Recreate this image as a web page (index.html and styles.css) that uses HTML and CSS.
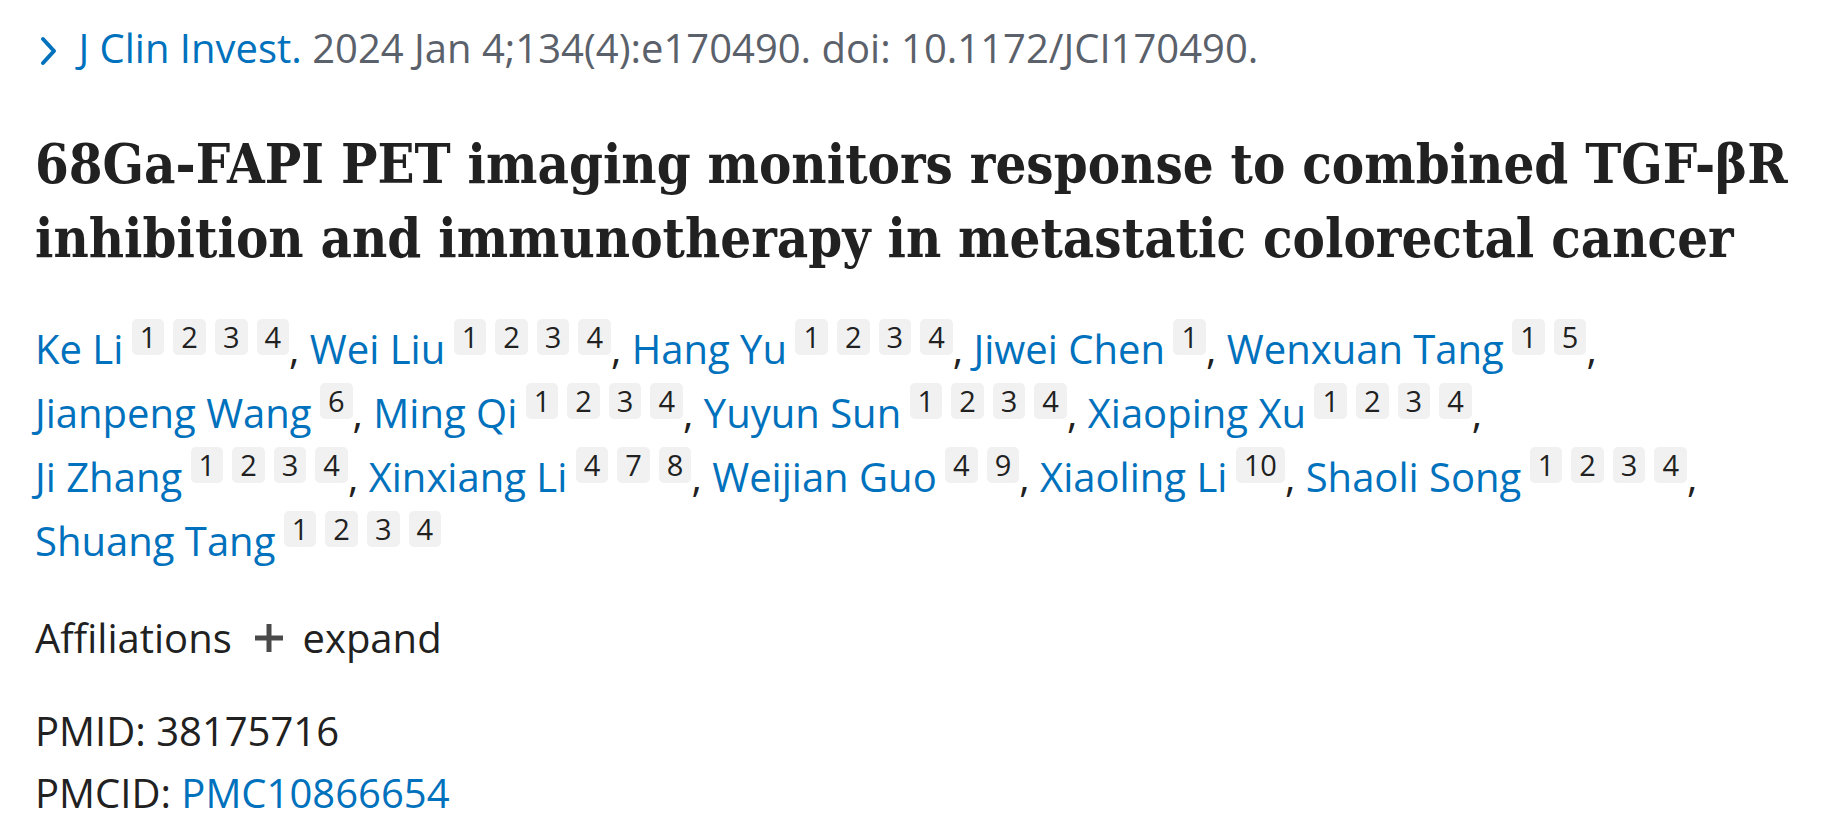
FILE: index.html
```html
<!DOCTYPE html>
<html lang="en">
<head>
    <meta charset="UTF-8">
    <meta name="viewport" content="width=device-width, initial-scale=1.0">
    <title>68Ga-FAPI PET imaging - PubMed</title>
    <link rel="stylesheet" href="styles.css">
</head>
<body>

    <main class="article">
        <!-- citation -->
        <div class="citation">
            <svg class="chev" width="18" height="30" viewBox="0 0 18 30"><polyline points="3,3 14,15 3,27" fill="none" stroke="#0071bc" stroke-width="4" stroke-linecap="round" stroke-linejoin="round"/></svg>
            <a class="journal" href="#">J Clin Invest.</a>
            <span class="cit">2024 Jan 4;134(4):e170490. doi: 10.1172/JCI170490.</span>
        </div>

        <h1 class="heading-title">68Ga-FAPI PET imaging monitors response to combined TGF-βR inhibition and immunotherapy in metastatic colorectal cancer</h1>

        <!-- authors -->
        <div class="authors-list">
            <span class="author"><a href="#">Ke Li</a> <span class="aff"><a>1</a><a>2</a><a>3</a><a>4</a></span>,</span>
            <span class="author"><a href="#">Wei Liu</a> <span class="aff"><a>1</a><a>2</a><a>3</a><a>4</a></span>,</span>
            <span class="author"><a href="#">Hang Yu</a> <span class="aff"><a>1</a><a>2</a><a>3</a><a>4</a></span>,</span>
            <span class="author"><a href="#">Jiwei Chen</a> <span class="aff"><a>1</a></span>,</span>
            <span class="author"><a href="#">Wenxuan Tang</a> <span class="aff"><a>1</a><a>5</a></span>,</span>
            <span class="author"><a href="#">Jianpeng Wang</a> <span class="aff"><a>6</a></span>,</span>
            <span class="author"><a href="#">Ming Qi</a> <span class="aff"><a>1</a><a>2</a><a>3</a><a>4</a></span>,</span>
            <span class="author"><a href="#">Yuyun Sun</a> <span class="aff"><a>1</a><a>2</a><a>3</a><a>4</a></span>,</span>
            <span class="author"><a href="#">Xiaoping Xu</a> <span class="aff"><a>1</a><a>2</a><a>3</a><a>4</a></span>,</span>
            <span class="author"><a href="#">Ji Zhang</a> <span class="aff"><a>1</a><a>2</a><a>3</a><a>4</a></span>,</span>
            <span class="author"><a href="#">Xinxiang Li</a> <span class="aff"><a>4</a><a>7</a><a>8</a></span>,</span>
            <span class="author"><a href="#">Weijian Guo</a> <span class="aff"><a>4</a><a>9</a></span>,</span>
            <span class="author"><a href="#">Xiaoling Li</a> <span class="aff"><a>10</a></span>,</span>
            <span class="author"><a href="#">Shaoli Song</a> <span class="aff"><a>1</a><a>2</a><a>3</a><a>4</a></span>,</span>
            <span class="author"><a href="#">Shuang Tang</a> <span class="aff"><a>1</a><a>2</a><a>3</a><a>4</a></span></span>
        </div>

        <div class="affiliations">
            Affiliations
            <span class="expand">
                <svg class="plus" width="30" height="30" viewBox="0 0 30 30"><path d="M15 1v28M1 15h28" stroke="#4a4a4a" stroke-width="5"/></svg>
                expand
            </span>
        </div>

        <ul class="identifiers">
            <li>PMID: 38175716</li>
            <li>PMCID: <a href="#">PMC10866654</a></li>
        </ul>
    </main>

</body>
</html>
```

FILE: styles.css
```css
body,ul,li,h1{
    margin: 0;padding: 0;
}
body{
    font-family: "Open Sans", "Noto Sans", sans-serif;font-size: 40px;color: #212121;background: #fff;
}
a{
    color: #0071bc;text-decoration: none;
}
.article{
    padding: 18px 30px 0 35px;
}
.citation{
    line-height: 60px;color: #5b616b;
}
.citation .chev{
    vertical-align: -3px;margin: 0 10px 0 5px;
}
.heading-title{
    margin-top: 49px;font-family: "DejaVu Serif Condensed", "DejaVu Serif", serif;font-weight: bold;
    font-size: 54px;line-height: 74px;color: #212121;
}
.authors-list{
    margin-top: 42px;line-height: 64px;
}
.authors-list .author{
    white-space: nowrap;
}
.aff{
    margin-left: -2px;
}
.aff a{
    display: inline-block;height: 36px;line-height: 36px;padding: 0 8px;margin-right: 9px;
    background: #f1f1f1;border-radius: 5px;color: #212121;font-size: 29px;vertical-align: 16px;
}
.aff a:last-child{
    margin-right: 0;
}
.affiliations{
    margin-top: 33px;line-height: 64px;
}
.affiliations .expand{
    margin-left: 12px;
}
.affiliations .plus{
    vertical-align: 0;margin-right: 8px;
}
.identifiers{
    list-style: none;margin-top: 30px;line-height: 62px;
}
```
